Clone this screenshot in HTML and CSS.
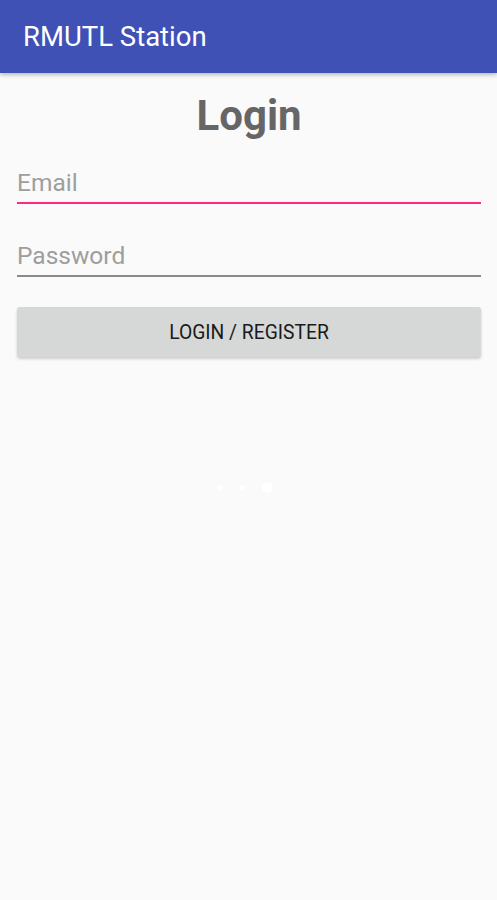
FILE: index.html
```html
<!DOCTYPE html>
<html lang="en">
<head>
  <meta charset="UTF-8">
  <title>RMUTL Station</title>
  <link rel="stylesheet" href="styles.css">
</head>
<body>

  <div class="appbar">RMUTL Station</div>

  <div class="content">
    <h1 class="title">Login</h1>

    <div class="field field-focus">
      <input type="email" placeholder="Email">
    </div>
    <div class="field">
      <input type="password" placeholder="Password">
    </div>

    <button class="btn">LOGIN / REGISTER</button>

    <div class="dots">
      <span class="dot"></span>
      <span class="dot"></span>
      <span class="dot dot-big"></span>
    </div>
  </div>

</body>
</html>
```

FILE: styles.css
```css
body {
  margin: 0;
  background-color: #fafafa;
  font-family: Roboto, "Noto Sans", sans-serif;
  height: 900px;
}

.appbar {
  height: 73px;
  background-color: #3f51b5;
  color: #fff;
  font-size: 27.5px;
  padding-left: 23px;
  display: flex;
  align-items: center;
  box-shadow: 0 2px 4px rgba(0,0,0,0.25);
  position: relative;
}

.content {
  padding: 0 16px 0 17px;
}

.title {
  margin: 20px 0 0;
  text-align: center;
  font-size: 42px;
  font-weight: bold;
  color: #666;
  line-height: 46px;
}

.field {
  border-bottom: 2px solid #8a8a8a;
  height: 40px;
  margin-top: 16px;
}

.field + .field {
  margin-top: 31px;
}

.field-focus {
  border-bottom-color: #ff2a7f;
  margin-top: 23px;
}

.field input {
  border: none;
  background: transparent;
  outline: none;
  width: 100%;
  padding: 0;
  font-family: Roboto, "Noto Sans", sans-serif;
  font-size: 24.5px;
  height: 40px;
  color: #333;
}

.field input::placeholder {
  color: #9e9e9e;
}

.btn {
  display: block;
  width: 100%;
  height: 50px;
  margin-top: 30px;
  border: none;
  border-radius: 3px;
  background-color: #d6d7d7;
  color: #1a1a1a;
  font-family: Roboto, "Noto Sans", sans-serif;
  font-size: 19.3px;
  box-shadow: 0 2px 3px rgba(0,0,0,0.18);
}

.dots {
  display: flex;
  justify-content: center;
  align-items: center;
  gap: 17px;
  margin-top: 125px;
  padding-right: 8px;
}

.dot {
  width: 5px;
  height: 5px;
  border-radius: 50%;
  background: #fff;
}

.dot-big {
  width: 11px;
  height: 11px;
}
```
